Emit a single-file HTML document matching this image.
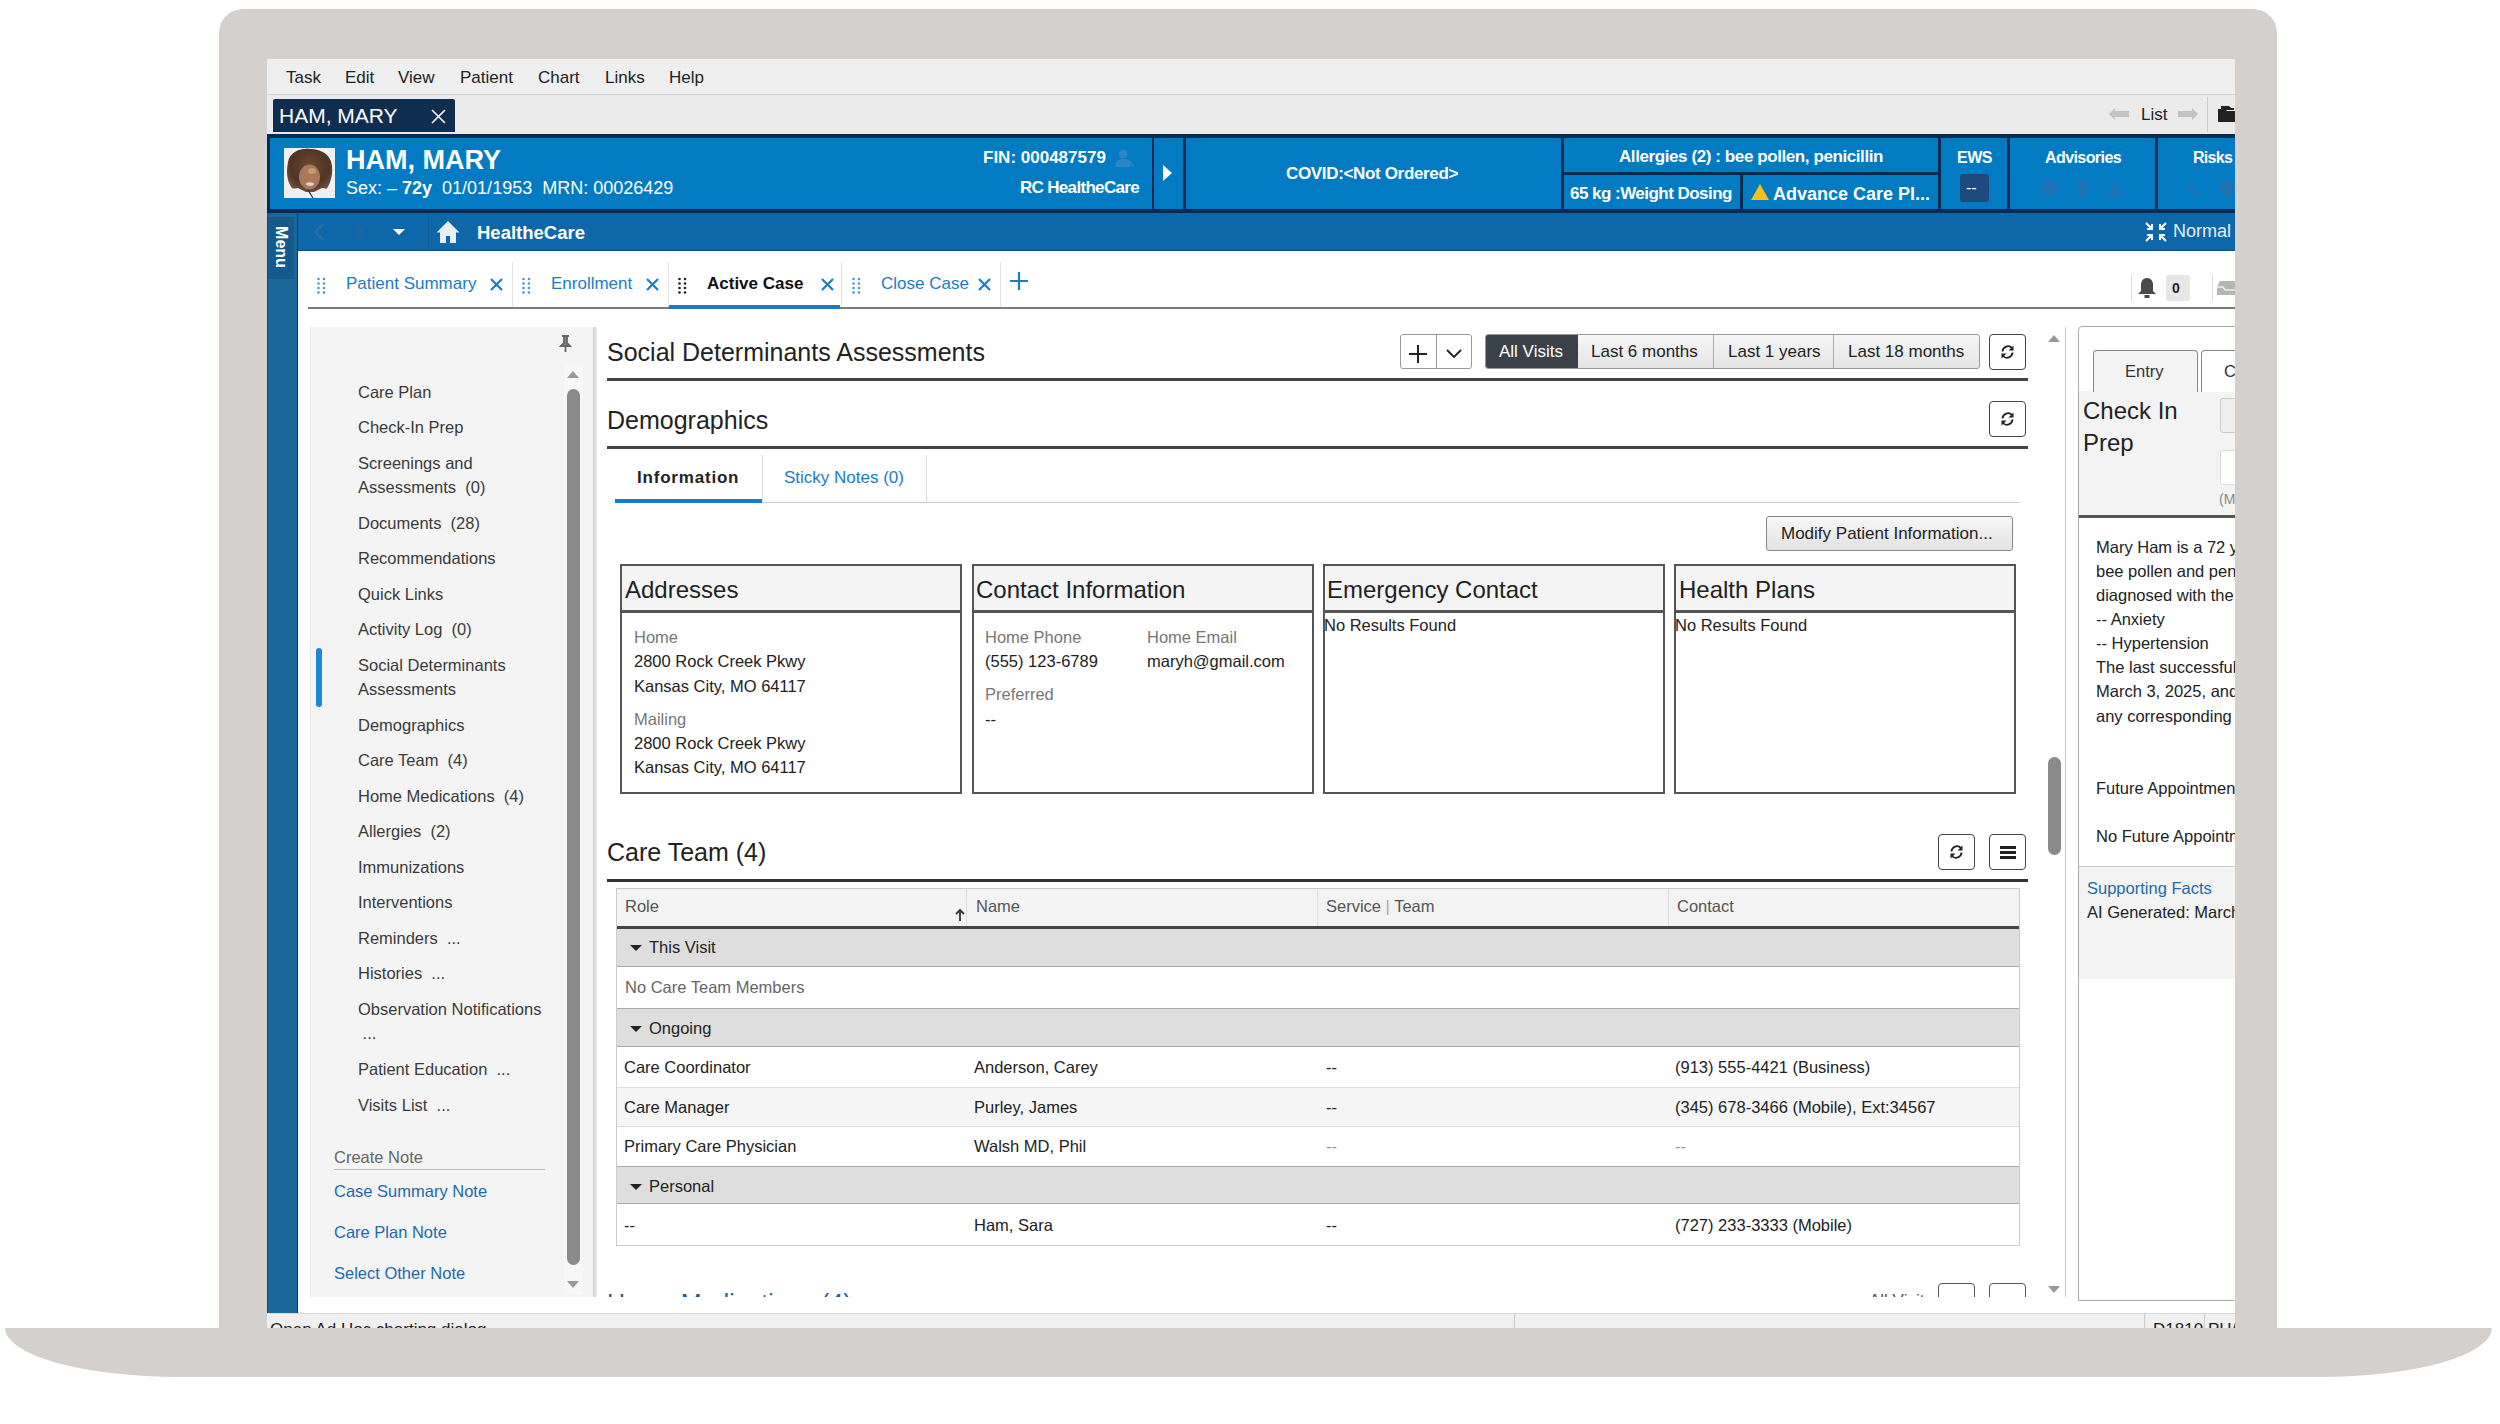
<!DOCTYPE html>
<html><head><meta charset="utf-8">
<style>
*{margin:0;padding:0;box-sizing:border-box}
html,body{width:2500px;height:1424px;overflow:hidden;background:#fff}
body{font-family:"Liberation Sans",sans-serif;position:relative;color:#222}
.a{position:absolute}
.t{position:absolute;white-space:nowrap;line-height:24px;font-size:16.5px}
#frame{left:219px;top:9px;width:2058px;height:1330px;background:#d4d0cd;border-radius:24px 24px 0 0}
#base{left:5px;top:1328px;width:2487px;height:49px;background:#d4d0cd;border-radius:0 0 172px 175px / 0 0 49px 49px}
#screen{left:267px;top:59px;width:1968px;height:1269px;background:#fff;overflow:hidden}
#w{position:absolute;left:-267px;top:-59px;width:2500px;height:1424px}
.wh{color:#fff}
.cell{position:absolute;background:#027bc2}
.card{width:342px;height:230px;border:2px solid #555;background:#fff}
.ch{position:absolute;left:0;top:0;width:338px;height:47px;background:#f4f4f4;border-bottom:3px solid #555}
.rb{width:37px;height:36px;border:1px solid #444;border-radius:4px;background:#fff}
.rbm{width:37px;height:36px;border:1px solid #444;border-radius:4px;background:#fff}
.rbm::after{content:"";position:absolute;left:10px;top:11px;width:16px;height:3px;background:#222;box-shadow:0 5px 0 #222,0 10px 0 #222}
.grp{left:617px;width:1402px;height:38px;background:#dedede;border-bottom:1px solid #aaa}
.tri{left:630px;width:0;height:0;border-top:6px solid #222;border-left:6px solid transparent;border-right:6px solid transparent}
</style></head><body>
<div id="frame" class="a"></div>
<div id="base" class="a"></div>
<div id="screen" class="a"><div id="w">
<!-- menu bar -->
<div class="a" style="left:267px;top:59px;width:1968px;height:36px;background:#efefef;border-bottom:1px solid #d6d6d6"></div>
<div class="t" style="left:286px;top:66px;font-size:17px;color:#222">Task</div>
<div class="t" style="left:345px;top:66px;font-size:17px;color:#222">Edit</div>
<div class="t" style="left:398px;top:66px;font-size:17px;color:#222">View</div>
<div class="t" style="left:460px;top:66px;font-size:17px;color:#222">Patient</div>
<div class="t" style="left:538px;top:66px;font-size:17px;color:#222">Chart</div>
<div class="t" style="left:605px;top:66px;font-size:17px;color:#222">Links</div>
<div class="t" style="left:669px;top:66px;font-size:17px;color:#222">Help</div>
<!-- patient tab row -->
<div class="a" style="left:267px;top:95px;width:1968px;height:39px;background:#ebebeb"></div>
<div class="a" style="left:273px;top:99px;width:182px;height:33px;background:#0f2d4e;border-radius:2px 2px 0 0"></div>
<div class="t wh" style="left:279px;top:104px;font-size:21px">HAM, MARY</div>
<svg class="a" style="left:431px;top:109px" width="15" height="15"><path d="M1 1L14 14M14 1L1 14" stroke="#fff" stroke-width="1.6"/></svg>
<svg class="a" style="left:2108px;top:107px" width="22" height="14"><path d="M1 7L7 1V4H21V10H7V13Z" fill="#c4c4c4"/></svg>
<div class="t" style="left:2141px;top:103px;font-size:17px;color:#222">List</div>
<svg class="a" style="left:2177px;top:107px" width="22" height="14"><path d="M21 7L15 1V4H1V10H15V13Z" fill="#c4c4c4"/></svg>
<div class="a" style="left:2207px;top:97px;width:1px;height:35px;background:#ccc"></div>
<svg class="a" style="left:2217px;top:103px" width="20" height="20"><path d="M1 6H8L10 8H19V19H1Z" fill="#222"/><path d="M4 3H12L14 5H17V7H4Z" fill="#222"/></svg>
<!-- banner -->
<div class="a" style="left:267px;top:134px;width:1968px;height:79px;background:#062b52"></div>
<div class="cell" style="left:270px;top:138px;width:882px;height:71px"></div>
<div class="cell" style="left:1154px;top:138px;width:29px;height:71px"></div>
<div class="cell" style="left:1186px;top:138px;width:375px;height:71px"></div>
<div class="cell" style="left:1564px;top:138px;width:374px;height:34px"></div>
<div class="cell" style="left:1564px;top:175px;width:176px;height:34px"></div>
<div class="cell" style="left:1743px;top:175px;width:195px;height:34px"></div>
<div class="cell" style="left:1941px;top:138px;width:66px;height:71px"></div>
<div class="cell" style="left:2010px;top:138px;width:145px;height:71px"></div>
<div class="cell" style="left:2158px;top:138px;width:80px;height:71px"></div>
<svg class="a" style="left:284px;top:148px" width="51" height="50"><defs><radialGradient id="hg" cx="0.5" cy="0.4" r="0.6"><stop offset="0" stop-color="#6b4a33"/><stop offset="0.7" stop-color="#4e3422"/><stop offset="1" stop-color="#6a5040"/></radialGradient></defs><rect width="51" height="50" fill="#eef2f4"/><g style="filter:blur(0.7px)"><path d="M4 14C6 3 18 0 26 1C36 1 47 6 48 18C49 28 46 36 42 42L36 44L16 44L8 40C3 34 2 24 4 14Z" fill="url(#hg)"/><ellipse cx="25.5" cy="29" rx="10.5" ry="12.5" fill="#a87858"/><ellipse cx="28" cy="23" rx="4" ry="3" fill="#c49a70"/><ellipse cx="26" cy="36" rx="4" ry="1.8" fill="#e2d2c4"/><path d="M0 42L14 40L22 44L26 50H0Z" fill="#f1eef0"/><path d="M51 42L38 40L30 44L28 50H51Z" fill="#f1eef0"/><path d="M24 42L29 50" stroke="#3a2a20" stroke-width="1.2"/></g></svg>
<div class="t wh" style="left:346px;top:145px;font-size:27px;line-height:30px;font-weight:bold">HAM, MARY</div>
<div class="t wh" style="left:346px;top:176px;font-size:18px">Sex: &#x2013; <b>72y</b>&nbsp; 01/01/1953&nbsp; MRN: 00026429</div>
<div class="t wh" style="left:983px;top:146px;font-size:17px;font-weight:bold">FIN: 000487579</div>
<svg class="a" style="left:1114px;top:148px" width="22" height="20"><g fill="#2b86c6"><circle cx="9" cy="6" r="4.5"/><path d="M1 19C1 13 4 11 9 11S17 13 17 19Z"/><path d="M15 12L21 18L19 19L14 14Z"/></g></svg>
<div class="t wh" style="left:1020px;top:176px;font-size:17px;font-weight:bold;letter-spacing:-0.68px">RC HealtheCare</div>
<div class="a" style="left:1163px;top:165px;width:0;height:0;border-left:9px solid #fff;border-top:8px solid transparent;border-bottom:8px solid transparent"></div>
<div class="t wh" style="left:1286px;top:162px;font-size:17px;font-weight:bold;letter-spacing:-0.34px">COVID:&lt;Not Ordered&gt;</div>
<div class="t wh" style="left:1619px;top:145px;font-size:17px;font-weight:bold;letter-spacing:-0.41px">Allergies (2) : bee pollen, penicillin</div>
<div class="t wh" style="left:1570px;top:182px;font-size:17px;font-weight:bold;letter-spacing:-0.53px">65 kg :Weight Dosing</div>
<div class="t wh" style="left:1773px;top:182px;font-size:18px;font-weight:bold">Advance Care Pl...</div>
<div class="a" style="left:1751px;top:184px;width:0;height:0;border-bottom:16px solid #f4c21a;border-left:9px solid transparent;border-right:9px solid transparent"></div>
<div class="t wh" style="left:1957px;top:146px;font-size:16px;font-weight:bold;letter-spacing:-0.5px">EWS</div>
<div class="a" style="left:1960px;top:174px;width:29px;height:28px;background:#1f4a7c;border-radius:3px"></div>
<div class="t wh" style="left:1966px;top:176px;font-size:16px">--</div>
<div class="t wh" style="left:2045px;top:146px;font-size:16px;font-weight:bold;letter-spacing:-0.58px">Advisories</div>
<div class="t wh" style="left:2193px;top:146px;font-size:16px;font-weight:bold;letter-spacing:-0.7px">Risks</div>
<svg class="a" style="left:2038px;top:177px" width="95" height="22"><g fill="#1f70b0"><circle cx="11" cy="11" r="8"/><rect x="40" y="3" width="10" height="17" rx="3"/><path d="M77 2L84 20H70Z"/></g></svg>
<svg class="a" style="left:2183px;top:177px" width="52" height="22"><g fill="#1f70b0"><path d="M4 4L18 18L14 19L3 8Z"/><circle cx="44" cy="11" r="8"/></g></svg>
<!-- nav bar -->
<div class="a" style="left:267px;top:213px;width:1968px;height:38px;background:#0e67a8;border-bottom:1px solid #0b4f8c"></div>
<div class="a" style="left:267px;top:213px;width:31px;height:1100px;background:#1b6799;border-left:1px solid #1a4a6e;border-right:1px solid #0b3562"></div>
<div class="a" style="left:268px;top:217px;width:26px;height:62px;background:#16598c"></div>
<div class="t wh" style="left:249px;top:237px;font-size:16px;font-weight:bold;transform:rotate(90deg);width:64px;text-align:center;line-height:20px">Menu</div>
<svg class="a" style="left:312px;top:222px" width="14" height="20"><path d="M11 2L3 10L11 18" stroke="#2a6da6" stroke-width="2.5" fill="none"/></svg>
<svg class="a" style="left:352px;top:222px" width="14" height="20"><path d="M3 2L11 10L3 18" stroke="#1f64a0" stroke-width="3" fill="none"/></svg>
<div class="a" style="left:393px;top:229px;width:0;height:0;border-top:6px solid #fff;border-left:6px solid transparent;border-right:6px solid transparent"></div>
<div class="a" style="left:428px;top:213px;width:1px;height:38px;background:#125a93"></div>
<svg class="a" style="left:436px;top:220px" width="24" height="24"><path d="M12 1L0.5 12.5H4V23H10V16H14V23H20V12.5H23.5Z" fill="#e8eef4"/></svg>
<div class="t wh" style="left:477px;top:221px;font-size:18.5px;font-weight:bold">HealtheCare</div>
<svg class="a" style="left:2144px;top:221px" width="24" height="22"><path d="M2 2L8 8M8 3V8H3M22 2L16 8M16 3V8H21M2 20L8 14M8 19V14H3M22 20L16 14M16 19V14H21" stroke="#fff" stroke-width="2" fill="none"/></svg>
<div class="t wh" style="left:2173px;top:219px;font-size:18px;color:#e6eef6">Normal</div>
<!-- tab row -->
<div class="a" style="left:298px;top:251px;width:1937px;height:57px;background:#fff"></div>
<div class="a" style="left:308px;top:307px;width:1927px;height:2px;background:#7a7a7a"></div>
<div class="t" style="left:346px;top:272px;font-size:17px;color:#1a7cc6">Patient Summary</div>
<div class="t" style="left:551px;top:272px;font-size:17px;color:#1a7cc6">Enrollment</div>
<div class="t" style="left:707px;top:272px;font-size:17px;color:#111;font-weight:bold">Active Case</div>
<div class="t" style="left:881px;top:272px;font-size:17px;color:#1a7cc6">Close Case</div>
<div class="a" style="left:668px;top:305px;width:172px;height:4px;background:#1a7cc6"></div>
<!-- tab row extras -->
<div class="a" style="left:512px;top:262px;width:1px;height:45px;background:#e3e3e3"></div>
<div class="a" style="left:668px;top:262px;width:1px;height:45px;background:#e3e3e3"></div>
<div class="a" style="left:841px;top:262px;width:1px;height:45px;background:#e3e3e3"></div>
<div class="a" style="left:1000px;top:262px;width:1px;height:45px;background:#e3e3e3"></div>
<svg class="a" style="left:317px;top:277px" width="9" height="18"><g fill="#4a97d2"><circle cx="1.5" cy="2" r="1.3"/><circle cx="1.5" cy="6.5" r="1.3"/><circle cx="1.5" cy="11" r="1.3"/><circle cx="1.5" cy="15.5" r="1.3"/><circle cx="7" cy="2" r="1.3"/><circle cx="7" cy="6.5" r="1.3"/><circle cx="7" cy="11" r="1.3"/><circle cx="7" cy="15.5" r="1.3"/></g></svg>
<svg class="a" style="left:522px;top:277px" width="9" height="18"><g fill="#4a97d2"><circle cx="1.5" cy="2" r="1.3"/><circle cx="1.5" cy="6.5" r="1.3"/><circle cx="1.5" cy="11" r="1.3"/><circle cx="1.5" cy="15.5" r="1.3"/><circle cx="7" cy="2" r="1.3"/><circle cx="7" cy="6.5" r="1.3"/><circle cx="7" cy="11" r="1.3"/><circle cx="7" cy="15.5" r="1.3"/></g></svg>
<svg class="a" style="left:678px;top:277px" width="9" height="18"><g fill="#222"><circle cx="1.5" cy="2" r="1.3"/><circle cx="1.5" cy="6.5" r="1.3"/><circle cx="1.5" cy="11" r="1.3"/><circle cx="1.5" cy="15.5" r="1.3"/><circle cx="7" cy="2" r="1.3"/><circle cx="7" cy="6.5" r="1.3"/><circle cx="7" cy="11" r="1.3"/><circle cx="7" cy="15.5" r="1.3"/></g></svg>
<svg class="a" style="left:852px;top:277px" width="9" height="18"><g fill="#4a97d2"><circle cx="1.5" cy="2" r="1.3"/><circle cx="1.5" cy="6.5" r="1.3"/><circle cx="1.5" cy="11" r="1.3"/><circle cx="1.5" cy="15.5" r="1.3"/><circle cx="7" cy="2" r="1.3"/><circle cx="7" cy="6.5" r="1.3"/><circle cx="7" cy="11" r="1.3"/><circle cx="7" cy="15.5" r="1.3"/></g></svg>
<svg class="a" style="left:489px;top:277px" width="15" height="15"><path d="M2 2L13 13M13 2L2 13" stroke="#1a7cc6" stroke-width="2.2"/></svg>
<svg class="a" style="left:645px;top:277px" width="15" height="15"><path d="M2 2L13 13M13 2L2 13" stroke="#1a7cc6" stroke-width="2.2"/></svg>
<svg class="a" style="left:820px;top:277px" width="15" height="15"><path d="M2 2L13 13M13 2L2 13" stroke="#1a7cc6" stroke-width="2.2"/></svg>
<svg class="a" style="left:977px;top:277px" width="15" height="15"><path d="M2 2L13 13M13 2L2 13" stroke="#1a7cc6" stroke-width="2.2"/></svg>
<svg class="a" style="left:1009px;top:271px" width="20" height="20"><path d="M10 1V19M1 10H19" stroke="#1a7cc6" stroke-width="2.2"/></svg>
<div class="a" style="left:2131px;top:274px;width:1px;height:28px;background:#ddd"></div>
<svg class="a" style="left:2136px;top:276px" width="22" height="24"><path d="M11 2c-4 0-6 3-6 7v6l-3 3h18l-3-3V9c0-4-2-7-6-7z" fill="#4a4a4a"/><rect x="8.5" y="19" width="5" height="3" fill="#4a4a4a"/></svg>
<div class="a" style="left:2166px;top:275px;width:24px;height:26px;background:#e6e6e6;border-radius:2px"></div>
<div class="t" style="left:2172px;top:276px;font-size:14px;font-weight:bold;color:#222">0</div>
<div class="a" style="left:2212px;top:274px;width:1px;height:28px;background:#ddd"></div>
<svg class="a" style="left:2216px;top:279px" width="20" height="18"><path d="M1 8L4 2H19V16H1Z" fill="#b5b5b5"/><path d="M1 8H7L9 11H19" stroke="#eee" stroke-width="1.5" fill="none"/></svg>
<!-- left panel -->
<div class="a" style="left:310px;top:327px;width:283px;height:970px;background:#f4f4f4;border-left:1px solid #e8e8e8"></div>
<div class="a" style="left:593px;top:327px;width:4px;height:970px;background:linear-gradient(90deg,#d0d0d0,#eee)"></div>
<div class="a" style="left:564px;top:365px;width:19px;height:930px;background:#f7f7f7"></div>
<div class="a" style="left:567px;top:389px;width:13px;height:876px;background:#8a8a8a;border-radius:7px"></div>
<div class="a" style="left:567px;top:371px;width:0;height:0;border-bottom:7px solid #999;border-left:6px solid transparent;border-right:6px solid transparent"></div>
<div class="a" style="left:567px;top:1281px;width:0;height:0;border-top:7px solid #999;border-left:6px solid transparent;border-right:6px solid transparent"></div>
<svg class="a" style="left:559px;top:335px" width="13" height="18"><path d="M3 1H10M5 1V8L2 11H11L8 8V1M6.5 11V17" stroke="#666" stroke-width="1.8" fill="#888"/></svg>
<div class="a" style="left:316px;top:648px;width:6px;height:59px;background:#1a8ad6;border-radius:3px"></div>
<div class="t" style="left:358px;top:380px;color:#3a3a3a">Care Plan</div>
<div class="t" style="left:358px;top:415px;color:#3a3a3a">Check-In Prep</div>
<div class="t" style="left:358px;top:451px;color:#3a3a3a">Screenings and</div>
<div class="t" style="left:358px;top:475px;color:#3a3a3a">Assessments&nbsp; (0)</div>
<div class="t" style="left:358px;top:511px;color:#3a3a3a">Documents&nbsp; (28)</div>
<div class="t" style="left:358px;top:546px;color:#3a3a3a">Recommendations</div>
<div class="t" style="left:358px;top:582px;color:#3a3a3a">Quick Links</div>
<div class="t" style="left:358px;top:617px;color:#3a3a3a">Activity Log&nbsp; (0)</div>
<div class="t" style="left:358px;top:653px;color:#3a3a3a">Social Determinants</div>
<div class="t" style="left:358px;top:677px;color:#3a3a3a">Assessments</div>
<div class="t" style="left:358px;top:713px;color:#3a3a3a">Demographics</div>
<div class="t" style="left:358px;top:748px;color:#3a3a3a">Care Team&nbsp; (4)</div>
<div class="t" style="left:358px;top:784px;color:#3a3a3a">Home Medications&nbsp; (4)</div>
<div class="t" style="left:358px;top:819px;color:#3a3a3a">Allergies&nbsp; (2)</div>
<div class="t" style="left:358px;top:855px;color:#3a3a3a">Immunizations</div>
<div class="t" style="left:358px;top:890px;color:#3a3a3a">Interventions</div>
<div class="t" style="left:358px;top:926px;color:#3a3a3a">Reminders&nbsp; ...</div>
<div class="t" style="left:358px;top:961px;color:#3a3a3a">Histories&nbsp; ...</div>
<div class="t" style="left:358px;top:997px;color:#3a3a3a">Observation Notifications</div>
<div class="t" style="left:358px;top:1021px;color:#3a3a3a">&nbsp;...</div>
<div class="t" style="left:358px;top:1057px;color:#3a3a3a">Patient Education&nbsp; ...</div>
<div class="t" style="left:358px;top:1093px;color:#3a3a3a">Visits List&nbsp; ...</div>
<div class="t" style="left:334px;top:1145px;color:#666">Create Note</div>
<div class="a" style="left:334px;top:1169px;width:211px;height:1px;background:#bbb"></div>
<div class="t" style="left:334px;top:1179px;color:#1f6aa8">Case Summary Note</div>
<div class="t" style="left:334px;top:1220px;color:#1f6aa8">Care Plan Note</div>
<div class="t" style="left:334px;top:1261px;color:#1f6aa8">Select Other Note</div>
<!-- main content -->
<div class="t" style="left:607px;top:337px;font-size:25px;line-height:30px;color:#222">Social Determinants Assessments</div>
<div class="a" style="left:607px;top:378px;width:1421px;height:3px;background:#444"></div>
<div class="a" style="left:1400px;top:334px;width:72px;height:35px;border:1px solid #999;border-radius:3px;background:#fff"></div>
<div class="a" style="left:1436px;top:334px;width:1px;height:35px;background:#999"></div>
<svg class="a" style="left:1408px;top:344px" width="20" height="20"><path d="M10 1V19M1 10H19" stroke="#222" stroke-width="2"/></svg>
<svg class="a" style="left:1445px;top:346px" width="18" height="14"><path d="M2 4L9 11L16 4" stroke="#222" stroke-width="1.8" fill="none"/></svg>
<div class="a" style="left:1485px;top:334px;width:495px;height:35px;border:1px solid #999;border-radius:3px;background:linear-gradient(#f6f6f6,#e4e4e4);overflow:hidden">
 <div class="a" style="left:0;top:0;width:92px;height:35px;background:#3b4148"></div>
 <div class="a" style="left:227px;top:0;width:1px;height:35px;background:#aaa"></div>
 <div class="a" style="left:347px;top:0;width:1px;height:35px;background:#aaa"></div>
</div>
<div class="t" style="left:1499px;top:340px;font-size:17px;color:#fff">All Visits</div>
<div class="t" style="left:1591px;top:340px;font-size:17px;color:#222">Last 6 months</div>
<div class="t" style="left:1728px;top:340px;font-size:17px;color:#222">Last 1 years</div>
<div class="t" style="left:1848px;top:340px;font-size:17px;color:#222">Last 18 months</div>
<div class="a rb" style="left:1989px;top:334px"><svg width="35" height="34" style="position:absolute;left:0;top:0"><path d="M12.5 16.5a5.5 5.5 0 0 1 9.5-3.5M22.5 17.5a5.5 5.5 0 0 1-9.5 3.5" stroke="#222" stroke-width="1.8" fill="none"/><path d="M23.5 10.5v5h-5zM11.5 23.5v-5h5z" fill="#222"/></svg></div>
<div class="t" style="left:607px;top:405px;font-size:25px;line-height:30px;color:#222">Demographics</div>
<div class="a" style="left:607px;top:446px;width:1421px;height:3px;background:#444"></div>
<div class="a rb" style="left:1989px;top:401px"><svg width="35" height="34" style="position:absolute;left:0;top:0"><path d="M12.5 16.5a5.5 5.5 0 0 1 9.5-3.5M22.5 17.5a5.5 5.5 0 0 1-9.5 3.5" stroke="#222" stroke-width="1.8" fill="none"/><path d="M23.5 10.5v5h-5zM11.5 23.5v-5h5z" fill="#222"/></svg></div>
<!-- info tabs -->
<div class="a" style="left:762px;top:502px;width:1258px;height:1px;background:#ccc"></div>
<div class="a" style="left:762px;top:455px;width:1px;height:47px;background:#ddd"></div>
<div class="a" style="left:926px;top:455px;width:1px;height:47px;background:#ddd"></div>
<div class="a" style="left:615px;top:499px;width:147px;height:4px;background:#1a7cc6"></div>
<div class="t" style="left:637px;top:466px;font-size:17px;font-weight:bold;color:#222;letter-spacing:0.8px">Information</div>
<div class="t" style="left:784px;top:466px;font-size:17px;color:#1a7cc6">Sticky Notes (0)</div>
<div class="a" style="left:1766px;top:516px;width:247px;height:35px;border:1px solid #888;border-radius:3px;background:linear-gradient(#f7f7f7,#e2e2e2)"></div>
<div class="t" style="left:1781px;top:522px;font-size:17px;color:#222">Modify Patient Information...</div>
<!-- cards -->
<div class="card a" style="left:620px;top:564px"><div class="ch"></div></div>
<div class="card a" style="left:972px;top:564px"><div class="ch"></div></div>
<div class="card a" style="left:1323px;top:564px"><div class="ch"></div></div>
<div class="card a" style="left:1674px;top:564px"><div class="ch"></div></div>
<div class="t" style="left:625px;top:575px;font-size:24px;line-height:30px;color:#222">Addresses</div>
<div class="t" style="left:976px;top:575px;font-size:24px;line-height:30px;color:#222">Contact Information</div>
<div class="t" style="left:1327px;top:575px;font-size:24px;line-height:30px;color:#222">Emergency Contact</div>
<div class="t" style="left:1679px;top:575px;font-size:24px;line-height:30px;color:#222">Health Plans</div>
<div class="t" style="left:634px;top:625px;color:#777">Home</div>
<div class="t" style="left:634px;top:649px;color:#222">2800 Rock Creek Pkwy</div>
<div class="t" style="left:634px;top:674px;color:#222">Kansas City, MO 64117</div>
<div class="t" style="left:634px;top:707px;color:#777">Mailing</div>
<div class="t" style="left:634px;top:731px;color:#222">2800 Rock Creek Pkwy</div>
<div class="t" style="left:634px;top:755px;color:#222">Kansas City, MO 64117</div>
<div class="t" style="left:985px;top:625px;color:#777">Home Phone</div>
<div class="t" style="left:985px;top:649px;color:#222">(555) 123-6789</div>
<div class="t" style="left:1147px;top:625px;color:#777">Home Email</div>
<div class="t" style="left:1147px;top:649px;color:#222">maryh@gmail.com</div>
<div class="t" style="left:985px;top:682px;color:#777">Preferred</div>
<div class="t" style="left:985px;top:707px;color:#222">--</div>
<div class="t" style="left:1324px;top:613px;color:#222">No Results Found</div>
<div class="t" style="left:1675px;top:613px;color:#222">No Results Found</div>
<!-- care team -->
<div class="t" style="left:607px;top:837px;font-size:25px;line-height:30px;color:#222">Care Team (4)</div>
<div class="a" style="left:607px;top:879px;width:1421px;height:3px;background:#333"></div>
<div class="a rb" style="left:1938px;top:834px"><svg width="35" height="34" style="position:absolute;left:0;top:0"><path d="M12.5 16.5a5.5 5.5 0 0 1 9.5-3.5M22.5 17.5a5.5 5.5 0 0 1-9.5 3.5" stroke="#222" stroke-width="1.8" fill="none"/><path d="M23.5 10.5v5h-5zM11.5 23.5v-5h5z" fill="#222"/></svg></div>
<div class="a rbm" style="left:1989px;top:834px"></div>
<div class="a" style="left:616px;top:888px;width:1404px;height:358px;border:1px solid #ccc;background:#fff"></div>
<div class="a" style="left:617px;top:889px;width:1402px;height:37px;background:#f3f3f3"></div>
<div class="a" style="left:617px;top:926px;width:1402px;height:3px;background:#444"></div>
<div class="a" style="left:966px;top:889px;width:1px;height:37px;background:#ddd"></div>
<div class="a" style="left:1317px;top:889px;width:1px;height:37px;background:#ddd"></div>
<div class="a" style="left:1668px;top:889px;width:1px;height:37px;background:#ddd"></div>
<div class="t" style="left:625px;top:894px;color:#555">Role</div>
<div class="t" style="left:976px;top:894px;color:#555">Name</div>
<div class="t" style="left:1326px;top:894px;color:#555">Service <span style="color:#aaa">|</span> Team</div>
<div class="t" style="left:1677px;top:894px;color:#555">Contact</div>
<svg class="a" style="left:954px;top:908px" width="12" height="14"><path d="M6 13V2M2 6L6 2L10 6" stroke="#333" stroke-width="1.8" fill="none"/></svg>
<div class="grp a" style="top:929px"></div>
<div class="a" style="left:617px;top:1008px;width:1402px;height:1px;background:#aaa"></div>
<div class="grp a" style="top:1009px"></div>
<div class="a" style="left:617px;top:1087px;width:1402px;height:40px;background:#f5f5f5;border-top:1px solid #ddd;border-bottom:1px solid #ddd"></div>
<div class="grp a" style="top:1166px;border-top:1px solid #aaa"></div>
<div class="tri a" style="top:945px"></div>
<div class="tri a" style="top:1026px"></div>
<div class="tri a" style="top:1184px"></div>
<div class="t" style="left:649px;top:935px;color:#222">This Visit</div>
<div class="t" style="left:625px;top:975px;color:#666">No Care Team Members</div>
<div class="t" style="left:649px;top:1016px;color:#222">Ongoing</div>
<div class="t" style="left:624px;top:1055px;color:#222">Care Coordinator</div>
<div class="t" style="left:974px;top:1055px;color:#222">Anderson, Carey</div>
<div class="t" style="left:1326px;top:1055px;color:#222">--</div>
<div class="t" style="left:1675px;top:1055px;color:#222">(913) 555-4421 (Business)</div>
<div class="t" style="left:624px;top:1095px;color:#222">Care Manager</div>
<div class="t" style="left:974px;top:1095px;color:#222">Purley, James</div>
<div class="t" style="left:1326px;top:1095px;color:#222">--</div>
<div class="t" style="left:1675px;top:1095px;color:#222">(345) 678-3466 (Mobile), Ext:34567</div>
<div class="t" style="left:624px;top:1134px;color:#222">Primary Care Physician</div>
<div class="t" style="left:974px;top:1134px;color:#222">Walsh MD, Phil</div>
<div class="t" style="left:1326px;top:1134px;color:#999">--</div>
<div class="t" style="left:1675px;top:1134px;color:#999">--</div>
<div class="t" style="left:649px;top:1174px;color:#222">Personal</div>
<div class="t" style="left:624px;top:1213px;color:#222">--</div>
<div class="t" style="left:974px;top:1213px;color:#222">Ham, Sara</div>
<div class="t" style="left:1326px;top:1213px;color:#222">--</div>
<div class="t" style="left:1675px;top:1213px;color:#222">(727) 233-3333 (Mobile)</div>
<!-- clipped next section -->
<div class="a" style="left:598px;top:1280px;width:1480px;height:17px;overflow:hidden">
 <div class="t" style="left:9px;top:8px;font-size:25px;line-height:30px;color:#1f5f9a">Home Medications (4)</div>
 <div class="t" style="left:1271px;top:9px;font-size:17px;color:#555">All Visits</div>
 <div class="a" style="left:1340px;top:3px;width:37px;height:35px;border:1px solid #555;border-radius:4px"></div>
 <div class="a" style="left:1391px;top:3px;width:37px;height:35px;border:1px solid #555;border-radius:4px"></div>
</div>
<div class="a" style="left:2048px;top:335px;width:0;height:0;border-bottom:7px solid #999;border-left:6px solid transparent;border-right:6px solid transparent"></div>
<div class="a" style="left:2048px;top:757px;width:13px;height:98px;background:#8a8a8a;border-radius:7px"></div>
<div class="a" style="left:2048px;top:1286px;width:0;height:0;border-top:7px solid #999;border-left:6px solid transparent;border-right:6px solid transparent"></div>
<div class="a" style="left:2065px;top:327px;width:1px;height:970px;background:#ccc"></div>
<!-- right panel -->
<div class="a" style="left:2078px;top:326px;width:170px;height:975px;border:1px solid #aaa;border-radius:4px 0 0 0;background:#fff"></div>
<div class="a" style="left:2079px;top:391px;width:160px;height:125px;background:#f3f3f3"></div>
<div class="a" style="left:2079px;top:515px;width:160px;height:3px;background:#555"></div>
<div class="a" style="left:2093px;top:350px;width:105px;height:42px;border:1px solid #888;border-bottom:none;border-radius:4px 4px 0 0;background:#f3f3f3"></div>
<div class="a" style="left:2201px;top:350px;width:50px;height:42px;border:1px solid #888;border-bottom:none;border-radius:4px 4px 0 0;background:#fff"></div>
<div class="t" style="left:2125px;top:359px;color:#333">Entry</div>
<div class="t" style="left:2224px;top:359px;color:#333">C</div>
<div class="t" style="left:2083px;top:396px;font-size:24px;line-height:30px;color:#222">Check In</div>
<div class="t" style="left:2083px;top:428px;font-size:24px;line-height:30px;color:#222">Prep</div>
<div class="a" style="left:2220px;top:398px;width:30px;height:35px;border:1px solid #ccc;border-radius:3px;background:#eee"></div>
<div class="a" style="left:2220px;top:450px;width:30px;height:35px;border:1px solid #ddd;border-radius:3px;background:#fff"></div>
<div class="t" style="left:2219px;top:487px;font-size:14px;color:#888">(M</div>
<div class="t" style="left:2096px;top:535px;color:#222">Mary Ham is a 72 y</div>
<div class="t" style="left:2096px;top:559px;color:#222">bee pollen and pen</div>
<div class="t" style="left:2096px;top:583px;color:#222">diagnosed with the</div>
<div class="t" style="left:2096px;top:607px;color:#222">-- Anxiety</div>
<div class="t" style="left:2096px;top:631px;color:#222">-- Hypertension</div>
<div class="t" style="left:2096px;top:655px;color:#222">The last successful</div>
<div class="t" style="left:2096px;top:679px;color:#222">March 3, 2025, and</div>
<div class="t" style="left:2096px;top:704px;color:#222">any corresponding</div>
<div class="t" style="left:2096px;top:776px;color:#222">Future Appointments</div>
<div class="t" style="left:2096px;top:824px;color:#222">No Future Appointments</div>
<div class="a" style="left:2079px;top:866px;width:160px;height:1px;background:#ccc"></div>
<div class="a" style="left:2079px;top:867px;width:160px;height:112px;background:#f3f3f3"></div>
<div class="t" style="left:2087px;top:876px;color:#1f6aa8">Supporting Facts</div>
<div class="t" style="left:2087px;top:900px;color:#222">AI Generated: March</div>
<!-- status bar -->
<div class="a" style="left:267px;top:1313px;width:1968px;height:15px;background:#f0f0f0;border-top:1px solid #d8d8d8;overflow:hidden">
 <div class="t" style="left:3px;top:4px;font-size:17px;color:#222">Open Ad Hoc charting dialog</div>
 <div class="a" style="left:1247px;top:0;width:1px;height:15px;background:#ccc"></div>
 <div class="a" style="left:1877px;top:0;width:1px;height:15px;background:#ccc"></div>
 <div class="t" style="left:1886px;top:4px;font-size:17px;color:#222">D1810</div>
 <div class="a" style="left:1937px;top:0;width:1px;height:15px;background:#ccc"></div>
 <div class="t" style="left:1941px;top:4px;font-size:17px;color:#222">PH/</div>
</div>
<!--END-->


</div></div>
</body></html>
